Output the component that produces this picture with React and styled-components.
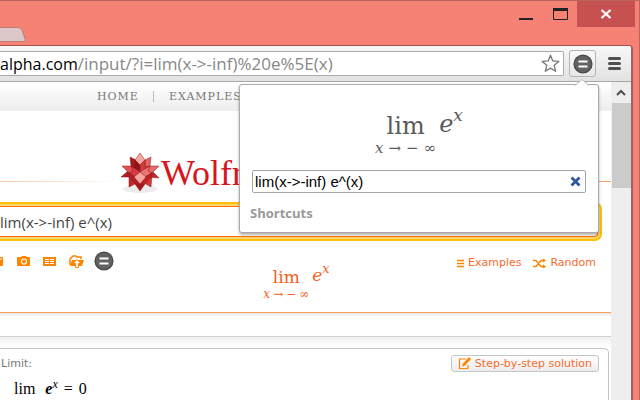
import React, { useState } from "react";
import styled, { createGlobalStyle } from "styled-components";

const SANS = `"Open Sans", "Noto Sans", sans-serif`;
const VERDANA = `"DejaVu Sans", sans-serif`;
const SERIF = `"DejaVu Serif", serif`;

const Limit = ({ size, color }) => (
  <LimitBox $size={size} $color={color}>
    <div className="operator">
      <span className="lim">lim</span>
      <span className="under">
        <i>x</i>
        <span>→</span>
        <span>−</span>
        <span>∞</span>
      </span>
    </div>
    <div className="power">
      <i>e</i>
      <i className="exponent">x</i>
    </div>
  </LimitBox>
);

const EqualsIcon = ({ size }) => (
  <svg width={size} height={size} viewBox="0 0 20 20" aria-hidden="true">
    <circle cx="10" cy="10" r="9.6" fill="#4c4c4c" />
    <circle cx="10" cy="10" r="8.2" fill="#626262" />
    <path d="M5.5 7.5h9M5.5 12.5h9" stroke="#fff" strokeWidth="2.2" />
  </svg>
);

const Spikey = () => (
  <svg width="40" height="42" viewBox="0 0 40 42" aria-hidden="true">
    <ellipse cx="19" cy="37" rx="17" ry="4" fill="#ececec" />
    <g stroke="#8e1a1e" strokeWidth="0.5" strokeLinejoin="round">
      <path d="M8 35l0-11 8 1 0 6z" fill="#c4262c" />
      <path d="M30 35l1-11-8 1 0 6z" fill="#d8383b" />
      <path d="M0 25l7-6 5 1-1 5z" fill="#b01d23" />
      <path d="M38 26l-7-7-5 1 1 5z" fill="#c4292e" />
      <path d="M1 14l9 0 3 5-5 2z" fill="#e25054" />
      <path d="M38 14l-9 0-3 5 5 2z" fill="#e8696a" />
      <path d="M19 39l-5-7 5-5 5 5z" fill="#a3171d" />
      <path d="M9 5l6 3 0 9-5-3z" fill="#a3171d" />
      <path d="M30 5l-6 3 0 9 5-3z" fill="#e46361" />
      <path d="M19 1l5 7-5 5-5-5z" fill="#f6a7a2" />
      <path d="M14 8l5 5 0 7-9-6 4 1z" fill="#8f1318" />
      <path d="M24 8l-5 5 0 7 10-6-5 1z" fill="#cf3a3c" />
      <path d="M10 14l9 6-5 5-6-4 4-2z" fill="#d7393d" />
      <path d="M29 14l-10 6 5 5 7-4-4-2z" fill="#ea7573" />
      <path d="M8 21l6 4 5 7-5 0-6-8z" fill="#b11e24" />
      <path d="M31 21l-7 4-5 7 5 0 7-8z" fill="#bd2329" />
      <path d="M19 20l6 5-6 7-6-7z" fill="#f7a5a0" />
    </g>
  </svg>
);

const App = () => {
  const [query, setQuery] = useState("lim(x->-inf) e^(x)");
  const [pageQuery, setPageQuery] = useState("lim(x->-inf) e^(x)");

  return (
    <>
      <GlobalStyle />
      <Window>
        <TitleBar>
          <Tab />
          <WindowButton type="button" aria-label="Minimize">
            <svg width="14" height="12">
              <path d="M0 11h14" stroke="#222" strokeWidth="2" />
            </svg>
          </WindowButton>
          <WindowButton type="button" aria-label="Maximize">
            <svg width="15" height="12">
              <path d="M.5 1v10.500h14V1" fill="none" stroke="#222" />
              <path d="M0 1.500h15" stroke="#222" strokeWidth="3" />
            </svg>
          </WindowButton>
          <CloseButton type="button" aria-label="Close">
            <svg width="12" height="10">
              <path d="M1.500 1l9 8M10.500 1l-9 8" stroke="#fff" strokeWidth="2.200" />
            </svg>
          </CloseButton>
        </TitleBar>

        <Browser>
          <Toolbar>
            <AddressBar>
              <Url>
                <b>alpha.com</b>/input/?i=lim(x-&gt;-inf)%20e%5E(x)
              </Url>
              <svg width="19" height="19" viewBox="0 0 19 19" aria-hidden="true">
                <path d="M9.500 1.200l2.300 5.700 6 .5-4.600 3.900 1.500 6-5.200-3.200-5.200 3.200 1.500-6-4.600-3.900 6-.5z" fill="#fff" stroke="#777" strokeWidth="1.300" strokeLinejoin="round" />
              </svg>
            </AddressBar>
            <ExtensionButton type="button" aria-label="Equation preview">
              <EqualsIcon size={20} />
            </ExtensionButton>
            <MenuButton type="button" aria-label="Menu">
              <svg width="13" height="13">
                <path d="M1.500 1.500h10M1.500 6.500h10M1.500 11.500h10" stroke="#4f4f4f" strokeWidth="3" strokeLinecap="round" />
              </svg>
            </MenuButton>
          </Toolbar>

          <Popup>
            <Arrow width="14" height="7" aria-hidden="true">
              <path d="M0 7L7 0l7 7z" fill="#fff" />
              <path d="M0 6.500L7 .5l7 6" fill="none" stroke="#bbb" />
            </Arrow>
            <Preview>
              <Limit size="large" color="#5a5a5a" />
            </Preview>
            <PopupField>
              <input
                type="text"
                aria-label="Equation"
                value={query}
                onChange={(e) => setQuery(e.target.value)}
              />
              <button type="button" aria-label="Clear" onClick={() => setQuery("")}>
                <svg width="11" height="11">
                  <path d="M1.500 1.500l8 8M9.500 1.500l-8 8" stroke="#31579f" strokeWidth="2.800" />
                </svg>
              </button>
            </PopupField>
            <Shortcuts>Shortcuts</Shortcuts>
          </Popup>

          <Viewport>
            <Page>
              <Nav>
                <a href="#home">HOME</a>
                <span />
                <a href="#examples">EXAMPLES</a>
              </Nav>
              <Brand>
                <Spikey />
                <span>Wolfram</span>
              </Brand>
              <SearchField>
                <input
                  type="text"
                  aria-label="Query"
                  value={pageQuery}
                  onChange={(e) => setPageQuery(e.target.value)}
                />
              </SearchField>
              <Tools>
                <InputTools>
                  <ToolIcons>
                    <svg width="4" height="13">
                      <path d="M0 2h2q1 0 1 1v7q0 1-1 1H0z" fill="#ff8500" />
                      <path d="M0 4.500l2-1" stroke="#fff" />
                    </svg>
                    <svg width="13" height="13">
                      <path d="M1 2h3l1-1h4l1 1h2q1 0 1 1v7q0 1-1 1H1q-1 0-1-1V3q0-1 1-1z" fill="#ff8500" />
                      <circle cx="7" cy="6.500" r="2.500" fill="none" stroke="#fff" strokeWidth="1.200" />
                    </svg>
                    <svg width="13" height="13">
                      <path d="M0 2h13v9H0z" fill="#ff8500" />
                      <path d="M2 4.500h4M7 4.500h4M2 6.500h4M7 6.500h4M2 8.500h4M7 8.500h4" stroke="#fff" />
                    </svg>
                    <svg width="15" height="13">
                      <path d="M1 10V4l3-3h3l1 1h4v2" fill="none" stroke="#ff8500" strokeWidth="1.600" />
                      <path d="M1 11l2-6h12l-2 6z" fill="#ff8500" />
                      <path d="M8 4.500l4 4H9.500v4h-3v-4H4z" fill="#fff" stroke="#ff8500" />
                    </svg>
                  </ToolIcons>
                  <EqualsIcon size={20} />
                </InputTools>
                <PageFormula>
                  <Limit size="small" color="#f9601c" />
                </PageFormula>
                <Links>
                  <a href="#examples">
                    <svg width="7" height="9">
                      <path d="M0 1.500h7M0 4.500h7M0 7.500h7" stroke="#ff8500" strokeWidth="1.300" />
                    </svg>
                    Examples
                  </a>
                  <a href="#random">
                    <svg width="13" height="9">
                      <path d="M0 1.500h3l5 6h4M0 7.500h3l5-6h4M10 0l2 1.500L10 3M10 6l2 1.500L10 9" fill="none" stroke="#ff8500" strokeWidth="1.300" />
                    </svg>
                    Random
                  </a>
                </Links>
              </Tools>
              <Divider />
              <Results>
                <Pod>
                  <PodHead>
                    <h2>Limit:</h2>
                    <StepButton type="button">
                      <svg width="13" height="13">
                        <path d="M8 2H1.500v9.500H10V8" fill="none" stroke="#ff8500" strokeWidth="1.200" />
                        <path d="M4 9.500l1-3L11 0l2 2-6 6.500z" fill="#ff8500" />
                      </svg>
                      Step-by-step solution
                    </StepButton>
                  </PodHead>
                  <Answer>
                    <span>lim</span>
                    <Result>
                      <span>
                        <b>e</b>
                        <sup>x</sup>
                      </span>
                      <span>=</span>
                      <span>0</span>
                    </Result>
                  </Answer>
                </Pod>
              </Results>
            </Page>
            <Scrollbar>
              <svg width="10" height="21">
                <path d="M1 13l4-4 4 4" fill="none" stroke="#4d4d4d" strokeWidth="2" />
              </svg>
              <div />
            </Scrollbar>
          </Viewport>
        </Browser>
      </Window>
    </>
  );
};

export default App;

const GlobalStyle = createGlobalStyle`
  * {
    box-sizing: border-box;
  }
  body {
    margin: 0;
    overflow: hidden;
  }
  svg {
    display: block;
    flex: none;
  }
  button {
    padding: 0;
    border: 0;
    background: none;
    font: inherit;
  }
  a {
    color: inherit;
    text-decoration: none;
  }
`;

const Window = styled.div`
  display: flex;
  flex-direction: column;
  height: 100vh;
  overflow: hidden;
  background: #f58275;
  border-top: 1px solid #b8655c;
  border-right: 1px solid #b8655c;
`;

const TitleBar = styled.div`
  display: flex;
  align-items: flex-start;
  height: 44px;
  flex: none;
  padding-right: 4px;
`;

const Tab = styled.div`
  align-self: flex-end;
  width: 32px;
  height: 15px;
  margin: 0 auto 3px -8px;
  background: #dcc7c9;
  border: 1px solid #c27a76;
  border-radius: 3px 4px 2px 3px;
  transform: skewX(18deg);
`;

const WindowButton = styled.button`
  display: flex;
  justify-content: center;
  width: 34px;
  padding-top: 7px;
`;

const CloseButton = styled.button`
  display: flex;
  align-items: center;
  justify-content: center;
  width: 58px;
  height: 26px;
  background: #c75050;
`;

const Browser = styled.div`
  position: relative;
  display: flex;
  flex-direction: column;
  flex: 1;
  min-height: 0;
  margin-right: 6px;
  border-top: 1px solid #a8524c;
  border-right: 2px solid #a8605a;
  border-top-right-radius: 4px;
  background: #fff;
`;

const Toolbar = styled.div`
  display: flex;
  align-items: center;
  height: 36px;
  flex: none;
  padding-right: 10px;
  background: linear-gradient(#f8f8f8, #e2e2e2);
  border-bottom: 1px solid #a6a6a6;
  border-top-right-radius: 3px;
`;

const AddressBar = styled.div`
  display: flex;
  align-items: center;
  justify-content: space-between;
  flex: 1;
  height: 25px;
  padding-right: 3px;
  background: #fff;
  border: 1px solid #aaa;
  border-left: 0;
  border-radius: 0 2px 2px 0;
`;

const Url = styled.span`
  font-family: ${SANS};
  font-size: 17px;
  line-height: 22px;
  white-space: nowrap;
  color: #888;

  b {
    font-size: 16px;
    font-weight: 400;
    color: #000;
  }
`;

const ExtensionButton = styled.button`
  display: flex;
  align-items: center;
  justify-content: center;
  width: 27px;
  height: 27px;
  margin-left: 5px;
  border: 1px solid #b4b4b4;
  border-radius: 3px;
  background: linear-gradient(#fafafa, #e8e8e8);
`;

const MenuButton = styled.button`
  margin-left: 12px;
`;

const Popup = styled.section`
  position: absolute;
  z-index: 2;
  top: 38px;
  right: 32px;
  width: 360px;
  padding: 24px 12px 9px;
  background: #fff;
  border: 1px solid #aaa;
  border-radius: 3px;
  box-shadow: 0 2px 3px rgba(0, 0, 0, 0.3);
`;

const Arrow = styled.svg`
  position: absolute;
  top: -6px;
  right: 9px;
`;

const Preview = styled.div`
  display: flex;
  justify-content: center;
  height: 61px;
`;

const LimitBox = styled.div`
  display: flex;
  align-items: flex-start;
  gap: 3px;
  font-family: ${SERIF};
  font-size: ${(p) => (p.$size === "large" ? 24 : 17)}px;
  line-height: ${(p) => (p.$size === "large" ? 30 : 22)}px;
  color: ${(p) => p.$color};

  .operator {
    display: flex;
    flex-direction: column;
    align-items: center;
    padding-top: 2px;
  }

  .under {
    display: flex;
    gap: ${(p) => (p.$size === "large" ? 5 : 3)}px;
    font-size: ${(p) => (p.$size === "large" ? 15 : 12)}px;
    line-height: ${(p) => (p.$size === "large" ? 14 : 12)}px;
  }

  .power {
    display: flex;
    align-items: flex-start;
  }

  .exponent {
    font-size: ${(p) => (p.$size === "large" ? 17 : 13)}px;
    line-height: ${(p) => (p.$size === "large" ? 12 : 10)}px;
  }
`;

const PopupField = styled.div`
  display: flex;
  align-items: center;
  height: 23px;
  padding-right: 4px;
  border: 1px solid #a5a5ab;
  border-radius: 2px;

  input {
    flex: 1;
    min-width: 0;
    padding: 0 2px;
    border: 0;
    outline: 0;
    background: transparent;
    font-family: "Liberation Sans", Arial, sans-serif;
    font-size: 15px;
    color: #000;
  }
`;

const Shortcuts = styled.h1`
  margin: 10px -2px 0;
  font-family: ${SANS};
  font-size: 13px;
  line-height: 20px;
  font-weight: 700;
  color: #999;
`;

const Viewport = styled.div`
  display: flex;
  flex: 1;
  min-height: 0;
`;

const Page = styled.main`
  display: flex;
  flex-direction: column;
  flex: 1;
  min-width: 0;
  padding-top: 1px;
`;

const Nav = styled.nav`
  display: flex;
  align-items: center;
  height: 28px;
  flex: none;
  padding: 0 0 2px 97px;
  font-family: ${SERIF};
  font-size: 11px;
  letter-spacing: 1px;
  color: #777;
  background: linear-gradient(#fff, #ededed);

  span {
    height: 11px;
    margin: 0 15px 0 14px;
    border-left: 1px solid #bbb;
  }
`;

const Brand = styled.div`
  display: flex;
  align-items: flex-start;
  height: 91px;
  flex: none;
  padding: 41px 0 0 121px;
  background:
    linear-gradient(90deg, #f9c9a8, #fff) 0 70px / 120px 1px no-repeat,
    linear-gradient(#f5a36c, #f5a36c) 100% 70px / 40px 1px no-repeat;

  span {
    font-family: "Liberation Serif", serif;
    font-size: 36px;
    line-height: 42px;
    color: #d8141c;
  }
`;

const SearchField = styled.div`
  flex: none;
  margin-right: 9px;
  padding: 2px 2px 2px 0;
  background: #ffd66b;
  border: 2px solid #ffbf0b;
  border-left: 0;
  border-radius: 0 7px 7px 0;

  input {
    display: block;
    width: 100%;
    height: 31px;
    padding: 0;
    border: 1px solid #ff7200;
    border-left: 0;
    border-radius: 0 4px 4px 0;
    outline: 0;
    font-family: ${SANS};
    font-size: 15px;
    color: #444;
  }
`;

const Tools = styled.div`
  display: flex;
  align-items: flex-start;
  justify-content: space-between;
  height: 71px;
  flex: none;
  padding: 10px 15px 0 0;
`;

const InputTools = styled.div`
  display: flex;
  align-items: center;
  gap: 10px;
`;

const ToolIcons = styled.div`
  display: flex;
  gap: 13px;
`;

const PageFormula = styled.div`
  padding: 13px 0 0 22px;
`;

const Links = styled.div`
  display: flex;
  gap: 12px;
  padding-top: 5px;
  font-family: ${VERDANA};
  font-size: 11px;
  line-height: 14px;
  color: #f76b2c;

  a {
    display: flex;
    align-items: center;
    gap: 4px;
  }
`;

const Divider = styled.div`
  height: 24px;
  flex: none;
  border-top: 1px solid #fb9d5c;
  background: linear-gradient(#e6e6e6, #fff 4px);
`;

const Results = styled.div`
  flex: 1;
  padding: 11px 2px 0 0;
  border-top: 1px solid #d2d2d2;
  background: linear-gradient(#f0f0f0, #fff 10px);
`;

const Pod = styled.section`
  height: 100%;
  padding: 6px 9px 0 0;
  background: #fff;
  border: 1px solid #c4c4c4;
  border-width: 1px 1px 0 0;
  border-top-right-radius: 5px;
`;

const PodHead = styled.div`
  display: flex;
  align-items: center;
  justify-content: space-between;

  h2 {
    margin: 0;
    padding-left: 1px;
    font-family: ${VERDANA};
    font-size: 11px;
    line-height: 14px;
    font-weight: 400;
    color: #777;
  }
`;

const StepButton = styled.button`
  display: flex;
  align-items: center;
  gap: 4px;
  height: 17px;
  padding: 0 6px;
  border: 1px solid #c6c6c6;
  border-radius: 3px;
  background: linear-gradient(#fff, #ececec);
  font-family: ${VERDANA};
  font-size: 11px;
  color: #f76b2c;
`;

const Answer = styled.div`
  display: flex;
  gap: 10px;
  padding: 7px 0 0 14px;
  font-family: "Liberation Serif", serif;
  font-size: 16px;
  line-height: 20px;
  color: #000;

  b {
    font-style: italic;
  }

  sup {
    font-size: 12px;
    line-height: 0;
    font-style: italic;
  }
`;

const Result = styled.span`
  display: flex;
  gap: 6px;
`;

const Scrollbar = styled.div`
  display: flex;
  flex-direction: column;
  align-items: center;
  width: 20px;
  background: #eee;

  div {
    width: 19px;
    height: 85px;
    background: #cbcbcb;
  }
`;
